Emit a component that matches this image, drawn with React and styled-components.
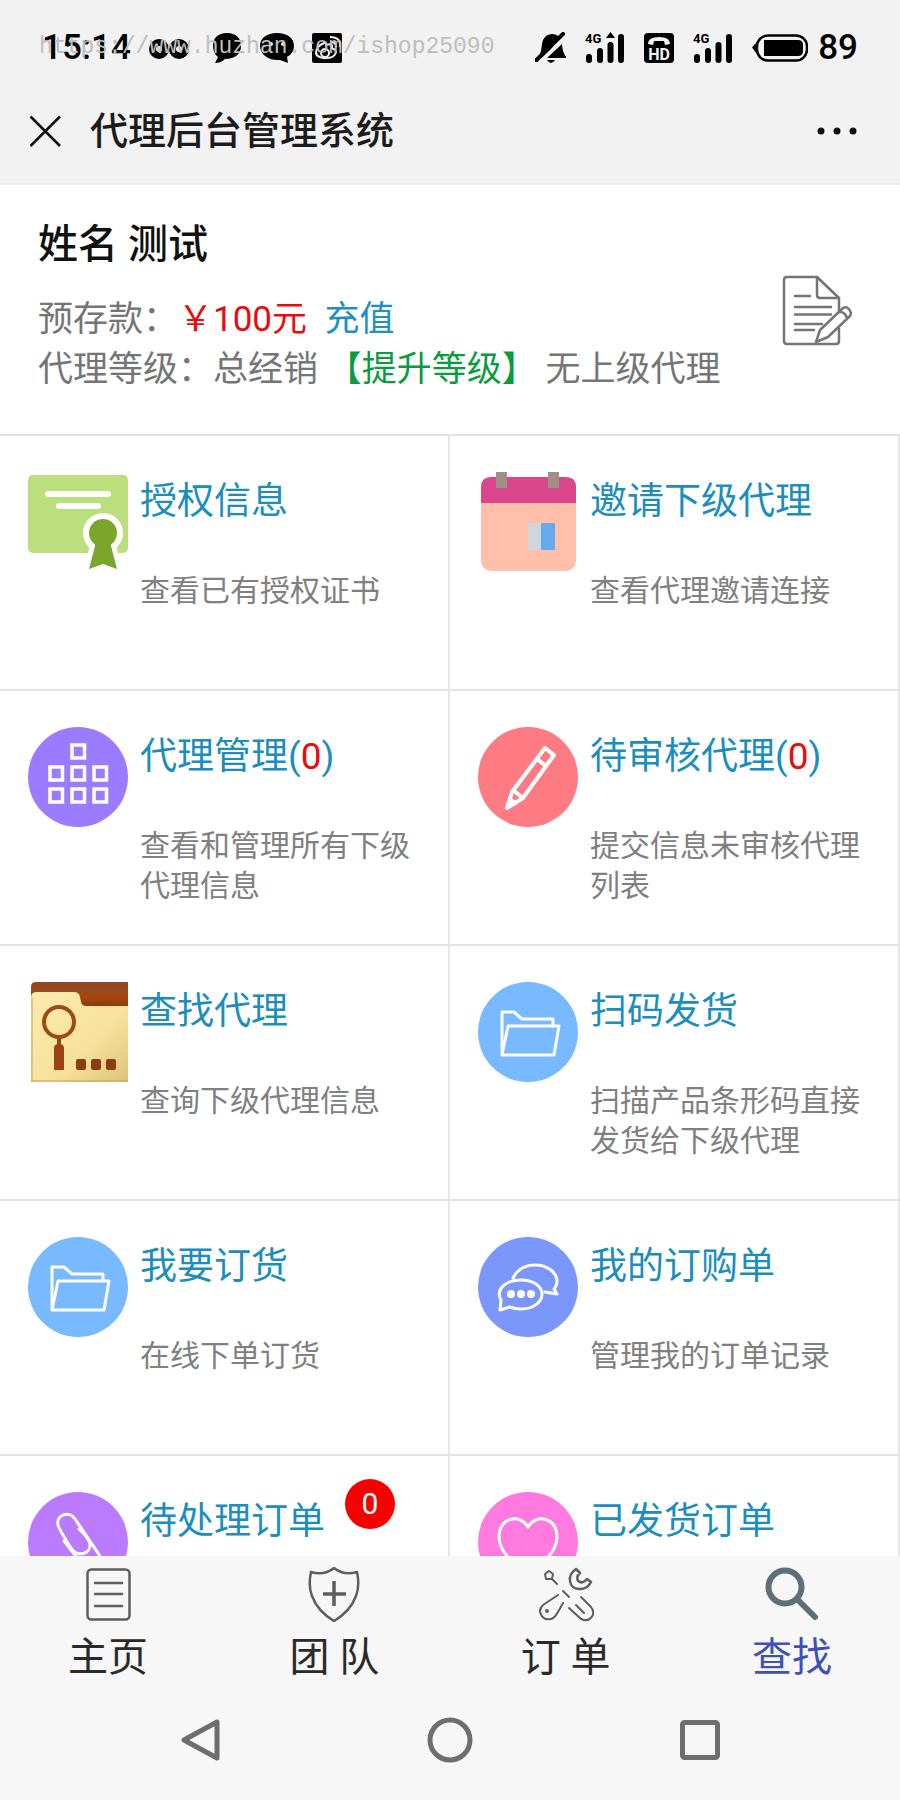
import React from "react";
import styled, { createGlobalStyle } from "styled-components";

const GlobalStyle = createGlobalStyle`
  *, *::before, *::after { box-sizing: border-box; }
  body {
    margin: 0;
    background: #fff;
    color: #757575;
    font-family: Roboto, "Noto Sans CJK SC", sans-serif;
  }
  a { color: inherit; text-decoration: none; }
  button { border: 0; padding: 0; background: none; color: inherit; font: inherit; cursor: pointer; }
  svg { display: block; flex: none; }
`;

const Screen = styled.div`
  display: flex;
  flex-direction: column;
  height: 100vh;
`;

/* ---------- header ---------- */

const Header = styled.header`
  flex: none;
  padding-bottom: 16px;
  border-bottom: 2px solid #eee;
  background: #f2f2f2;
`;

const StatusBar = styled.div`
  position: relative;
  display: flex;
  align-items: center;
  justify-content: space-between;
  height: 95px;
  padding: 0 42px;
  color: #000;
`;

const StatusGroup = styled.div`
  display: flex;
  align-items: center;
  gap: ${(p) => p.$gap}px;
`;

const StatusText = styled.span`
  font-size: 35px;
  font-weight: 500;
  line-height: 40px;
`;

const Watermark = styled.span`
  position: absolute;
  left: 39px;
  top: 32px;
  color: #bdbdbd;
  font-family: "Liberation Mono", monospace;
  font-size: 23px;
  line-height: 30px;
  white-space: nowrap;
`;

const TitleBar = styled.div`
  display: flex;
  align-items: center;
  gap: 28px;
  height: 72px;
  padding: 0 42px 0 28px;
`;

const IconButton = styled.button`
  display: flex;
  align-items: center;
  justify-content: center;
  color: ${(p) => p.$color || "#111"};
`;

const PageTitle = styled.h1`
  flex: 1;
  margin: 0;
  color: #1c1c1c;
  font-size: 38px;
  font-weight: 500;
  line-height: 56px;
`;

/* ---------- profile ---------- */

const Content = styled.main`
  flex: 1;
  min-height: 0;
  overflow-y: auto;
  scrollbar-width: none;
`;

const Profile = styled.section`
  display: flex;
  align-items: flex-start;
  justify-content: space-between;
  padding: 35px 46px 39px 38px;
  border-bottom: 2px solid #e4e4e4;
`;

const ProfileName = styled.h2`
  margin: 0 0 25px;
  color: #111;
  font-size: 40px;
  font-weight: 500;
  line-height: 50px;
`;

const ProfileLine = styled.p`
  margin: 0;
  font-size: 35px;
  line-height: 50px;
  white-space: pre-wrap;
`;

const Amount = styled.span`
  color: #e60d0d;
`;

const TextLink = styled.a`
  && { color: ${(p) => p.$color}; }
`;

const EditLink = styled.a`
  flex: none;
  padding-top: 55px;
`;

/* ---------- menu ---------- */

const Menu = styled.nav`
  display: grid;
  grid-template-columns: 1fr 1fr;
  grid-auto-rows: minmax(255px, auto);
`;

const MenuItem = styled.a`
  display: flex;
  align-items: flex-start;
  gap: 12px;
  padding: 36px 24px 36px 28px;
  border-right: 2px solid #e6e6e6;
  border-bottom: 2px solid #e4e4e4;
`;

const MenuTitle = styled.span`
  position: relative;
  display: inline-block;
  margin-top: 2px;
  color: #1b8ebd;
  font-size: 37px;
  line-height: 56px;
`;

const MenuText = styled.p`
  margin: 41px 0 0;
  color: #808080;
  font-size: 30px;
  line-height: 40px;
`;

const Badge = styled.span`
  position: absolute;
  top: -15px;
  left: calc(100% + 20px);
  width: 50px;
  border-radius: 50%;
  background: #f60000;
  color: #fff;
  font-size: 30px;
  line-height: 50px;
  text-align: center;
`;

/* ---------- footer ---------- */

const Footer = styled.footer`
  flex: none;
  background: #f7f7f7;
`;

const TabBar = styled.nav`
  display: flex;
  justify-content: space-between;
  padding: 10px 68px 0;
`;

const Tab = styled.a`
  display: flex;
  flex-direction: column;
  align-items: center;
  gap: 12px;
  && { color: ${(p) => (p.$active ? "#3f51b5" : "#2a2a2a")}; }
  font-size: 40px;
  line-height: 48px;
`;

const SystemNav = styled.div`
  display: grid;
  grid-template-columns: repeat(3, 250px);
  justify-content: center;
  height: 118px;
  padding-bottom: 2px;
`;

/* ---------- status icons ---------- */

const Signal = ({ arrow }) => (
  <svg width="40" height="32" viewBox="0 0 40 32">
    <text x="0" y="11" fontFamily="Roboto" fontSize="13" fontWeight="700">4G</text>
    <path d="M4 25v3M15 19v9M25.500 13v15M36 5v23" stroke="#000" strokeWidth="6" strokeLinecap="round" />
    {arrow && <path d="M25.500 0 30 6H21z" />}
  </svg>
);

const StatusLeft = () => (
  <StatusGroup $gap={18}>
    <StatusText>15:14</StatusText>
    <svg width="40" height="32" viewBox="0 0 40 32">
      <g fill="none" stroke="#000" strokeWidth="7">
        <circle cx="10" cy="17" r="6.500" />
        <circle cx="30" cy="17" r="6.500" />
      </g>
    </svg>
    <svg width="35" height="32" viewBox="0 0 35 32">
      <path d="M20 1C29 1 34 6 34 14S28 27 18 27Q14 31 8 31L11 25Q6 21 6 14C6 6 11 1 20 1Z" />
    </svg>
    <svg width="34" height="32" viewBox="0 0 34 32">
      <path d="M17 1C27 1 34 6 34 14Q34 21 27 25L28 31 20 28C8 29 0 22 0 14S7 1 17 1Z" />
      <circle cx="11" cy="12" r="2" fill="#f2f2f2" />
      <circle cx="23" cy="12" r="2" fill="#f2f2f2" />
    </svg>
    <svg width="30" height="32" viewBox="0 0 30 32">
      <rect y="1" width="30" height="30" rx="2" />
      <g fill="none" stroke="#f2f2f2" strokeWidth="2">
        <path d="M12 11C7 13 4 17 4 21c1 7 19 7 20-1 0-3-4-3-4-4 1-5-3-4-6-3 0-2 0-3-2-2Z" />
        <circle cx="13" cy="21" r="4" />
        <path d="M19 10q5 0 5 5M18 5q11 0 10 10" />
      </g>
    </svg>
  </StatusGroup>
);

const StatusRight = () => (
  <StatusGroup $gap={19}>
    <svg width="31" height="32" viewBox="0 0 31 32">
      <path d="M5 22C7 18 6 13 8 8q3-6 9-6 5 0 8 4L9 26H5ZM12 26 27 12q0 7 4 13v1ZM12 28h8q-4 6-8 0Z" />
      <path d="M1.500 28 28 2" stroke="#000" strokeWidth="4" strokeLinecap="round" />
      <path d="M5 29 30 5" stroke="#f2f2f2" strokeWidth="2" />
    </svg>
    <Signal arrow />
    <svg width="30" height="32" viewBox="0 0 30 32">
      <rect y="1" width="30" height="30" rx="4" />
      <path d="M4 12Q4 5 15 5t11 7l-5 1-1-4H10l-1 4Z" fill="#f2f2f2" />
      <text x="15" y="28" textAnchor="middle" fontFamily="Roboto" fontSize="16" fontWeight="700" fill="#f2f2f2">HD</text>
    </svg>
    <Signal />
    <StatusGroup $gap={10}>
      <svg width="56" height="32" viewBox="0 0 56 32">
        <path d="M5 10 0 15.500 5 22Z" />
        <rect x="5" y="3.500" width="50" height="25" rx="11" fill="none" stroke="#000" strokeWidth="2.500" />
        <path d="M12 8H46q5 0 5 5v6q0 5-5 5H12Z" />
      </svg>
      <StatusText>89</StatusText>
    </StatusGroup>
  </StatusGroup>
);

/* ---------- menu icons, all drawn on a 100 x 100 field ---------- */

const MenuIcon = ({ disc, children }) => (
  <svg width="100" height="100" viewBox="0 0 100 100" aria-hidden="true">
    {disc && <circle cx="50" cy="50" r="50" fill={disc} />}
    {children}
  </svg>
);

const Line = ({ width = 4, children }) => (
  <g fill="none" stroke="#fff" strokeWidth={width} strokeLinejoin="round" strokeLinecap="round">
    {children}
  </g>
);

const CertificateIcon = () => (
  <MenuIcon>
    <rect y="3" width="100" height="78" rx="5" fill="#badf7c" />
    <path d="M20 22H80M31 34H70" stroke="#fff" strokeWidth="6" strokeLinecap="round" />
    <path d="M62 71 57 99H93L88 71Z" fill="#fff" />
    <circle cx="75" cy="61" r="20" fill="#fff" />
    <circle cx="75" cy="61" r="14" fill="#7ba62c" />
    <path d="M67 70V74L61 97 75 92 89 97 83 74V70Z" fill="#7ba62c" />
  </MenuIcon>
);

const CalendarIcon = () => (
  <MenuIcon>
    <rect x="3" y="5" width="95" height="94" rx="10" fill="#ffbfab" />
    <path d="M3 31V15Q3 5 13 5H88Q98 5 98 15V31Z" fill="#d9468b" />
    <path d="M18 0H29V16H18ZM70 0H81V16H70Z" fill="#a38d87" />
    <path d="M50 51H63V78H50Z" fill="#cfd6dc" />
    <rect x="63" y="51" width="14" height="27" rx="1" fill="#66a9ec" />
  </MenuIcon>
);

const TEAM_BLOCKS = [[44, 18], [22, 40], [44, 40], [66, 40], [22, 62], [44, 62], [66, 62]];

const TeamIcon = () => (
  <MenuIcon disc="#9b7bff">
    <g fill="none" stroke="#fff" strokeWidth="3.500">
      {TEAM_BLOCKS.map(([x, y]) => (
        <rect key={`${x}-${y}`} x={x} y={y} width="12.500" height="13" />
      ))}
    </g>
  </MenuIcon>
);

const PencilIcon = () => (
  <MenuIcon disc="#ff7b83">
    <Line>
      <path d="M29 81 34 65 67 21 76 28 45 71Z" />
      <path d="M59 32 68 39M36 64 44 70M33 73 37 76" />
    </Line>
  </MenuIcon>
);

const FinderIcon = () => (
  <MenuIcon>
    <defs>
      <linearGradient id="finderPaper" x1="0" y1="0" x2="1" y2="1">
        <stop offset="0" stopColor="#fdebb0" />
        <stop offset="0.6" stopColor="#f6e29c" />
        <stop offset="1" stopColor="#dcc27a" />
      </linearGradient>
      <linearGradient id="finderTop" x1="0" y1="0" x2="0" y2="1">
        <stop offset="0" stopColor="#8e4a2b" />
        <stop offset="0.5" stopColor="#a8470f" />
        <stop offset="1" stopColor="#7e3009" />
      </linearGradient>
    </defs>
    <path d="M3 30V5Q3 0 8 0H100V30Z" fill="url(#finderTop)" />
    <path d="M3 100V16Q3 10 8 10H46Q51 10 52 15L53 20Q54 24 58 24H100V100Z" fill="url(#finderPaper)" />
    <path d="M4 100V16M3 99H100" stroke="#c99d50" strokeWidth="1" />
    <circle cx="31" cy="40" r="15" fill="none" stroke="#9c4a17" strokeWidth="4" />
    <path d="M29 56H33V62Q36 63 36 66V88H26V66Q26 63 29 62Z" fill="#9c4214" />
    <g fill="#8d3d10">
      <rect x="48" y="77" width="10" height="11" rx="2" />
      <rect x="63" y="77" width="10" height="11" rx="2" />
      <rect x="78" y="77" width="10" height="11" rx="2" />
    </g>
  </MenuIcon>
);

const FolderIcon = () => (
  <MenuIcon disc="#78b9ff">
    <Line width={3}>
      <path d="M24 72V30H36L44 37H75V44" />
      <path d="M30 44H81L76 73H24Z" />
    </Line>
  </MenuIcon>
);

const ChatIcon = () => (
  <MenuIcon disc="#7c97fb">
    <Line width={3}>
      <path d="M35 41C39 33 47 28 57 28 70 28 79 36 79 44Q79 49 76 52L79 57 67 55" />
      <path d="M22 73 23 63C17 52 28 43 43 43 55 43 64 49 64 57 64 66 54 72 43 72Q37 72 32 70Z" />
    </Line>
    <g fill="#fff">
      <circle cx="33" cy="57" r="4" />
      <circle cx="43" cy="57" r="4" />
      <circle cx="53" cy="57" r="4" />
    </g>
  </MenuIcon>
);

const ClipIcon = () => (
  <MenuIcon disc="#bb7bff">
    <Line width={3}>
      <path d="M76 78C75 70 73 66 70 61L47 27C41 18 28 23 30 33 31 37 34 42 43 56 49 66 63 62 62 52 61 48 57 42 51 37" />
      <path d="M36 49 50 67" />
    </Line>
  </MenuIcon>
);

const HeartIcon = () => (
  <MenuIcon disc="#ff7adf">
    <Line width={3}>
      <path d="M50 35C43 22 21 24 21 45 21 62 40 74 50 82 60 74 79 62 79 45 79 24 57 22 50 35Z" />
    </Line>
  </MenuIcon>
);

/* ---------- tab icons, 56 x 56 ---------- */

const TabIcon = ({ children }) => (
  <svg width="56" height="56" viewBox="0 0 56 56" fill="none" stroke="#5e5e5e" strokeWidth="2.500" strokeLinecap="round" strokeLinejoin="round" aria-hidden="true">
    {children}
  </svg>
);

const TABS = [
  {
    label: "主页",
    icon: <><rect x="7.500" y="3.500" width="42" height="50" rx="4" /><path d="M15 17H42M15 28H42M15 40H42" /></>,
  },
  {
    label: "团 队",
    icon: <><path d="M28 2Q18 10 5 6C3 15 3 22 6 30 10 41 18 49 28 55 38 49 46 41 50 30 53 22 53 15 51 6Q38 10 28 2Z" /><path d="M28 15V40M17 28H40" strokeWidth="3.500" strokeLinecap="butt" /></>,
  },
  {
    label: "订 单",
    icon: (
      <g strokeWidth="2">
        <path d="M7 8 11 5 15 8 14 13H8ZM14 13 19 18M25 25 31 31M38 39 46 47" />
        <path d="M38 3 42 7C35 13 43 21 49 13L53 16C48 26 33 25 32 15 31 9 34 6 38 3Z" strokeWidth="2.500" />
        <path d="M20 29 5 39C-2 46 5 55 13 53 17 52 19 48 25 37" />
        <path d="M43 31 53 41C59 49 51 57 43 53L31 42" />
        <circle cx="9" cy="45" r="1" />
      </g>
    ),
  },
  {
    label: "查找",
    active: true,
    icon: <g stroke="#5c7075"><circle cx="21" cy="21" r="16.500" strokeWidth="6" /><path d="M34 34 51 51" strokeWidth="6" /></g>,
  },
];

const NavIcon = ({ children }) => (
  <svg width="46" height="46" viewBox="0 0 46 46" fill="none" stroke="#6e6e6e" strokeWidth="5" strokeLinejoin="round">
    {children}
  </svg>
);

const MENU = [
  { title: "授权信息", text: "查看已有授权证书", Icon: CertificateIcon },
  { title: "邀请下级代理", text: "查看代理邀请连接", Icon: CalendarIcon },
  { title: "代理管理", count: 0, text: "查看和管理所有下级代理信息", Icon: TeamIcon },
  { title: "待审核代理", count: 0, text: "提交信息未审核代理列表", Icon: PencilIcon },
  { title: "查找代理", text: "查询下级代理信息", Icon: FinderIcon },
  { title: "扫码发货", text: "扫描产品条形码直接发货给下级代理", Icon: FolderIcon },
  { title: "我要订货", text: "在线下单订货", Icon: FolderIcon },
  { title: "我的订购单", text: "管理我的订单记录", Icon: ChatIcon },
  { title: "待处理订单", badge: 0, Icon: ClipIcon },
  { title: "已发货订单", Icon: HeartIcon },
];

export default function App() {
  return (
    <Screen>
      <GlobalStyle />
      <Header>
        <StatusBar>
          <StatusLeft />
          <StatusRight />
          <Watermark>https://www.huzhan.com/ishop25090</Watermark>
        </StatusBar>
        <TitleBar>
          <IconButton aria-label="关闭">
            <svg width="34" height="34" viewBox="0 0 34 34">
              <path d="M2.500 2.500 32 32M32 2.500 2.500 32" stroke="currentColor" strokeWidth="2.500" />
            </svg>
          </IconButton>
          <PageTitle>代理后台管理系统</PageTitle>
          <IconButton aria-label="更多">
            <svg width="42" height="10" viewBox="0 0 42 10" fill="currentColor">
              <circle cx="5" cy="5" r="3.500" />
              <circle cx="21" cy="5" r="3.500" />
              <circle cx="37" cy="5" r="3.500" />
            </svg>
          </IconButton>
        </TitleBar>
      </Header>

      <Content>
        <Profile>
          <div>
            <ProfileName>姓名 测试</ProfileName>
            <ProfileLine>
              预存款：<Amount>￥100元</Amount>{"  "}
              <TextLink href="#recharge" $color="#1f90c4">充值</TextLink>
            </ProfileLine>
            <ProfileLine>
              代理等级：总经销{" "}
              <TextLink href="#upgrade" $color="#0a9b3f">【提升等级】</TextLink>
              {" "}无上级代理
            </ProfileLine>
          </div>
          <EditLink href="#edit" aria-label="编辑资料">
            <svg width="72" height="72" viewBox="0 0 72 72" fill="none" stroke="#757575" strokeWidth="2.500" strokeLinejoin="round" strokeLinecap="round">
              <path d="M57 36V23L35 2H5Q2 2 2 5V66Q2 69 5 69H54Q57 69 57 66V54" />
              <path d="M35 2V20Q35 23 38 23H57M13 21H28M13 32H49M13 39.500H49M13 49H40M13 55H32" />
              <path d="M34 67 38 55 61 33Q66 30 69 38L68 41 46 62ZM58 37Q63 37 65 43" />
            </svg>
          </EditLink>
        </Profile>

        <Menu>
          {MENU.map(({ title, count, badge, text, Icon }) => (
            <MenuItem href="#" key={title}>
              <Icon />
              <div>
                <MenuTitle>
                  {title}
                  {count !== undefined && <>(<Amount>{count}</Amount>)</>}
                  {badge !== undefined && <Badge>{badge}</Badge>}
                </MenuTitle>
                {text && <MenuText>{text}</MenuText>}
              </div>
            </MenuItem>
          ))}
        </Menu>
      </Content>

      <Footer>
        <TabBar>
          {TABS.map(({ label, icon, active }) => (
            <Tab href="#" key={label} $active={active}>
              <TabIcon>{icon}</TabIcon>
              {label}
            </Tab>
          ))}
        </TabBar>
        <SystemNav>
          <IconButton aria-label="返回">
            <NavIcon><path d="M40 5V41L7 23Z" /></NavIcon>
          </IconButton>
          <IconButton aria-label="主屏幕">
            <NavIcon><circle cx="23" cy="23" r="20" /></NavIcon>
          </IconButton>
          <IconButton aria-label="最近任务">
            <NavIcon><rect x="5.500" y="5.500" width="35" height="35" rx="2" /></NavIcon>
          </IconButton>
        </SystemNav>
      </Footer>
    </Screen>
  );
}
